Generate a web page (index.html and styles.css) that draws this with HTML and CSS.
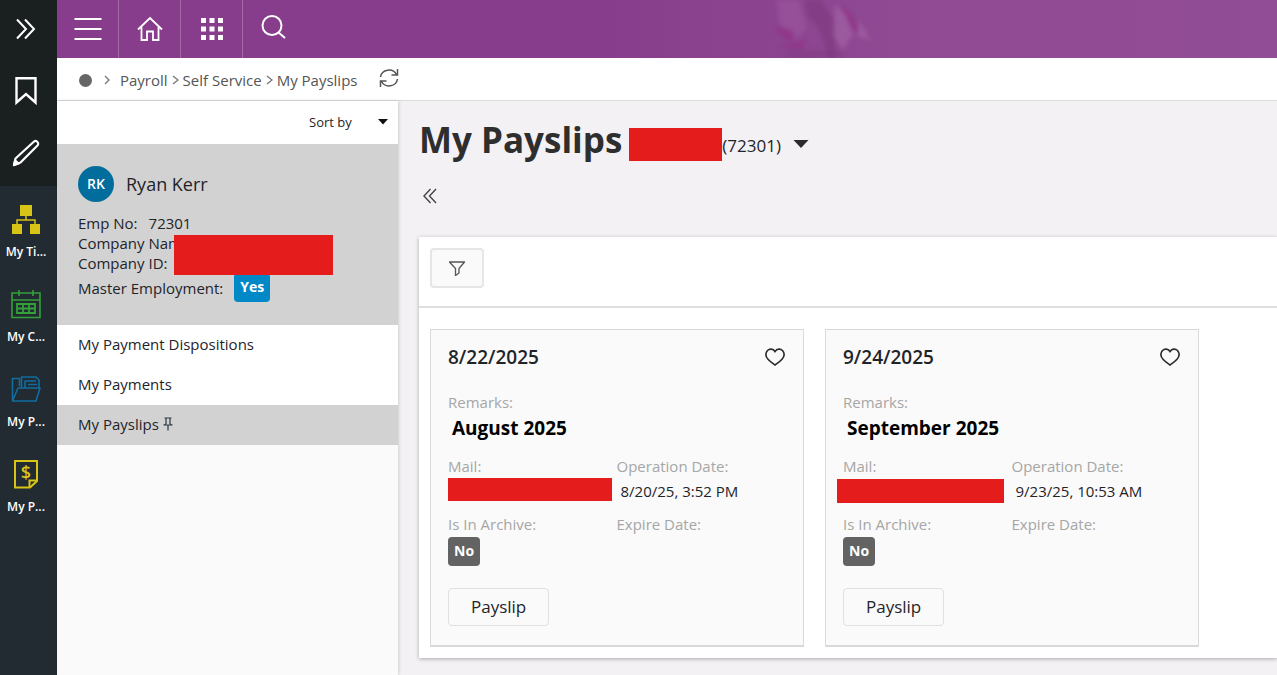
FILE: index.html
```
<!DOCTYPE html>
<html lang="en">
<head>
    <meta charset="UTF-8">
    <meta name="viewport" content="width=device-width, initial-scale=1.0">
    <title>My Payslips</title>
    <link rel="stylesheet" href="styles.css">
</head>
<body>
    <!-- Left rail -->
    <aside class="rail">
        <div class="rail-tools">
            <button type="button" class="rail-btn" aria-label="Expand menu">
                <svg width="20" height="22" viewBox="0 0 20 22" fill="none" stroke="#fff" stroke-width="2"><path d="M1 1.500l9 9.500-9 9.500M9 1.500l9 9.500-9 9.500"/></svg>
            </button>
            <button type="button" class="rail-btn" aria-label="Bookmarks">
                <svg width="22" height="30" viewBox="0 0 22 30" fill="none" stroke="#fff" stroke-width="2.400"><path d="M1.500 2.200h19v24.300L11 18 1.500 26.500z"/></svg>
            </button>
            <button type="button" class="rail-btn" aria-label="Edit">
                <svg width="28" height="28" viewBox="0 0 28 28" fill="none" stroke="#fff" stroke-width="2.200" stroke-linejoin="round"><path d="M2 26l1.500-6.500L21.500 3a2.200 2.200 0 0 1 4 3.500L8.500 23.500z"/><path d="M2 26l1.200-4.500 3.300 3z" fill="#fff"/></svg>
            </button>
        </div>
        <nav class="rail-nav">
            <a href="#" class="rail-link">
                <svg width="30" height="30" viewBox="0 0 30 30" fill="#d8c417"><path d="M9 1h12v11H9zM1 20h10v10H1zM19 20h10v10H19z"/><path d="M15 12v4M6 20v-4h18v4" fill="none" stroke="#d8c417" stroke-width="1.500"/></svg>
                <span>My Ti...</span>
            </a>
            <a href="#" class="rail-link">
                <svg width="30" height="30" viewBox="0 0 30 30" fill="none" stroke="#33a13a" stroke-width="1.600"><path d="M1 4h28v24.500H1zM1 11h28M8 1v6M22 1v6"/><path d="M6 15h18v9H6zM6 19.500h18M12 15v9M18 15v9" stroke-width="1.800"/></svg>
                <span>My C...</span>
            </a>
            <a href="#" class="rail-link">
                <svg width="30" height="30" viewBox="0 0 30 30" fill="none" stroke="#116d9f" stroke-width="1.600" stroke-linejoin="round"><path d="M1.500 27V4.500h7V12M1.500 27L7 14h22l-4 13z"/><path d="M10.500 14V3H25l3 3v8M14 14V7h11M17 10.500h9"/></svg>
                <span>My P...</span>
            </a>
            <a href="#" class="rail-link">
                <svg width="30" height="30" viewBox="0 0 30 30" fill="none" stroke="#d8c417" stroke-width="2"><path d="M4 2h22v20l-7 6.500H4z"/><path d="M18.500 28v-6.500H26"/><text x="15" y="20" text-anchor="middle" class="dollar">$</text></svg>
                <span>My P...</span>
            </a>
        </nav>
    </aside>

    <div class="page">
        <!-- Top bar -->
        <header class="topbar">
            <button type="button" class="top-btn" aria-label="Menu">
                <svg width="28" height="24" viewBox="0 0 28 24" stroke="#fff" stroke-width="2.200"><path d="M0.500 2h27M0.500 12h27M0.500 22h27"/></svg>
            </button>
            <button type="button" class="top-btn" aria-label="Home">
                <svg width="26" height="26" viewBox="0 0 26 26" fill="none" stroke="#fff" stroke-width="1.800"><path d="M1 13.500L13 2l12 11.500M4.500 11v13H10v-8.500h6V24h5.500V11"/></svg>
            </button>
            <button type="button" class="top-btn" aria-label="Apps">
                <svg width="22" height="22" viewBox="0 0 22 22" fill="#fff"><path d="M0 0h5v5H0zM8.500 0h5v5h-5zM17 0h5v5h-5zM0 8.500h5v5H0zM8.500 8.500h5v5h-5zM17 8.500h5v5h-5zM0 17h5v5H0zM8.500 17h5v5h-5zM17 17h5v5h-5z"/></svg>
            </button>
            <button type="button" class="top-btn" aria-label="Search">
                <svg width="26" height="28" viewBox="0 0 26 28" fill="none" stroke="#fff" stroke-width="2"><circle cx="11" cy="10.500" r="9.500"/><path d="M17.500 17.500l6.500 5.500"/></svg>
            </button>
            <svg class="banner" viewBox="0 0 120 58" aria-hidden="true">
                <path d="M8 0h22l8 28-10 10L10 24z" fill="#a765a8" opacity="0.350"/>
                <path d="M36 0h16l14 22v36h-8q-2-28-20-42z" fill="#753378" opacity="0.450"/>
                <path d="M4 28q14-2 22 6l-6 8zM72 6q10 4 14 14l6 14-8-4zM8 46l30-6-6 10z" fill="#932c84" opacity="0.550"/>
                <path d="M66 4l10 10 8 20-10 16-10-14zM90 20l12 20-14-4z" fill="#b47ab5" opacity="0.350"/>
                <path d="M20 50h50l6 8H16z" fill="#78347b" opacity="0.350"/>
            </svg>
        </header>

        <nav class="breadcrumb" aria-label="Breadcrumb">
            <span class="dot"></span>
            <svg class="chev first" width="6" height="10" viewBox="0 0 6 10"><path d="M1 1l4 4-4 4"/></svg>
            <a href="#">Payroll</a>
            <svg class="chev" width="7" height="10" viewBox="0 0 7 10"><path d="M1 1l5 4-5 4"/></svg>
            <a href="#">Self Service</a>
            <svg class="chev" width="7" height="10" viewBox="0 0 7 10"><path d="M1 1l5 4-5 4"/></svg>
            <a href="#">My Payslips</a>
            <button type="button" class="refresh" aria-label="Refresh">
                <svg width="20" height="20" viewBox="0 0 20 20" fill="none" stroke="#555" stroke-width="1.500"><path d="M1.500 9A8.500 8 0 0 1 17.500 6.500M18.500 1v6h-6M18.500 11A8.500 8 0 0 1 2.500 13.500M1.500 19v-6h6"/></svg>
            </button>
        </nav>

        <div class="columns">
            <!-- Employee panel -->
            <section class="side">
                <div class="sort-row">
                    <select class="sort" aria-label="Sort by">
                        <option>Sort by</option>
                    </select>
                    <svg width="10" height="6" viewBox="0 0 10 6"><path d="M0 0h10L5 5.500z" fill="#111"/></svg>
                </div>
                <div class="employee">
                    <div class="employee-head">
                        <span class="avatar">RK</span>
                        <span class="employee-name">Ryan Kerr</span>
                    </div>
                    <div class="facts">
                        <p><span>Emp No:</span><span>72301</span></p>
                        <p>Company Name:</p>
                        <p>Company ID:</p>
                        <span class="redact redact-company"></span>
                        <p class="master"><span>Master Employment:</span><span class="tag tag-yes">Yes</span></p>
                    </div>
                </div>
                <ul class="side-menu">
                    <li><a href="#">My Payment Dispositions</a></li>
                    <li><a href="#">My Payments</a></li>
                    <li class="active">
                        <a href="#">My Payslips
                            <svg width="10" height="14" viewBox="0 0 10 14" fill="none" stroke="#2b3944" stroke-width="1.200"><path d="M1.500 1h7M3 1v6M7 1v6M0.500 8h9M3 7L1 8M7 7l2 1M5 8v5.500"/></svg>
                        </a>
                    </li>
                </ul>
            </section>

            <main class="main">
                <div class="title-row">
                    <h1>My Payslips</h1>
                    <span class="redact redact-title"></span>
                    <span class="emp-id">(72301)</span>
                    <button type="button" class="caret" aria-label="Choose employee">
                        <svg width="16" height="8" viewBox="0 0 16 8"><path d="M0.500 0h15L8 8z" fill="#2b2b2b"/></svg>
                    </button>
                </div>
                <button type="button" class="collapse" aria-label="Collapse panel">
                    <svg width="14" height="16" viewBox="0 0 14 16" fill="none" stroke="#444" stroke-width="1.400"><path d="M7.500 1L1 8l6.500 7M13 1L6.500 8l6.500 7"/></svg>
                </button>

                <section class="panel">
                    <div class="panel-tools">
                        <button type="button" class="filter" aria-label="Filter">
                            <svg width="16" height="15" viewBox="0 0 16 15" fill="none" stroke="#555" stroke-width="1.300"><path d="M0.500 1h15L10 7.500V12l-3.500 2.500v-7z"/></svg>
                        </button>
                    </div>
                    <div class="cards">
                        <article class="card">
                            <div class="card-head">
                                <h2>8/22/2025</h2>
                                <button type="button" class="like" aria-label="Favourite">
                                    <svg width="20" height="18" viewBox="0 0 20 18" fill="none" stroke="#2b2b2b" stroke-width="1.600"><path d="M10 3.500C8 .5 4.500.5 2.500 2.500 0 5.500 1 9 3 11.200 5 13.500 8 15.500 10 17c2-1.500 5-3.500 7-5.800C19 9 20 5.500 17.500 2.500 15.500.5 12 .5 10 3.500z"/></svg>
                                </button>
                            </div>
                            <p class="label">Remarks:</p>
                            <p class="remark">August 2025</p>
                            <div class="fields">
                                <div>
                                    <p class="label">Mail:</p>
                                    <span class="redact redact-mail"></span>
                                </div>
                                <div>
                                    <p class="label">Operation Date:</p>
                                    <p class="value">8/20/25, 3:52 PM</p>
                                </div>
                                <div>
                                    <p class="label">Is In Archive:</p>
                                    <span class="tag tag-no">No</span>
                                </div>
                                <div>
                                    <p class="label">Expire Date:</p>
                                </div>
                            </div>
                            <button type="button" class="btn">Payslip</button>
                        </article>

                        <article class="card">
                            <div class="card-head">
                                <h2>9/24/2025</h2>
                                <button type="button" class="like" aria-label="Favourite">
                                    <svg width="20" height="18" viewBox="0 0 20 18" fill="none" stroke="#2b2b2b" stroke-width="1.600"><path d="M10 3.500C8 .5 4.500.5 2.500 2.500 0 5.500 1 9 3 11.200 5 13.500 8 15.500 10 17c2-1.500 5-3.500 7-5.800C19 9 20 5.500 17.500 2.500 15.500.5 12 .5 10 3.500z"/></svg>
                                </button>
                            </div>
                            <p class="label">Remarks:</p>
                            <p class="remark">September 2025</p>
                            <div class="fields">
                                <div>
                                    <p class="label">Mail:</p>
                                    <span class="redact redact-mail wide"></span>
                                </div>
                                <div>
                                    <p class="label">Operation Date:</p>
                                    <p class="value">9/23/25, 10:53 AM</p>
                                </div>
                                <div>
                                    <p class="label">Is In Archive:</p>
                                    <span class="tag tag-no">No</span>
                                </div>
                                <div>
                                    <p class="label">Expire Date:</p>
                                </div>
                            </div>
                            <button type="button" class="btn">Payslip</button>
                        </article>
                    </div>
                </section>
            </main>
        </div>
    </div>
</body>
</html>
```
FILE: styles.css
```
* {
    margin: 0;
    padding: 0;
    box-sizing: border-box;
}

body {
    display: flex;
    min-height: 100vh;
    background-color: #f3f1f4;
    color: #1f2429;
    font-family: "Open Sans", "Noto Sans", sans-serif;
    font-size: 15px;
    line-height: 20px;
}

a {
    color: inherit;
    text-decoration: none;
}

button,
select {
    border: none;
    background: none;
    color: inherit;
    font: inherit;
    cursor: pointer;
}

svg {
    display: block;
    flex: none;
}

/* Left rail */
.rail {
    flex: none;
    width: 57px;
    background-color: #222b32;
}

.rail-tools {
    display: flex;
    flex-direction: column;
    height: 186px;
    padding-right: 5px;
    background-color: #1a1f20;
}

.rail-btn {
    flex: 1;
    display: flex;
    align-items: center;
    justify-content: center;
    padding-bottom: 4px;
}

.rail-nav {
    padding: 18px 5px 0 0;
}

.rail-link {
    display: flex;
    flex-direction: column;
    align-items: center;
    gap: 8px;
    height: 85px;
    color: #fff;
    font-size: 12px;
    font-weight: 600;
}

.dollar {
    fill: #d8c417;
    stroke: none;
    font-size: 18px;
    font-weight: 600;
}

/* Top bar */
.page {
    flex: 1;
    min-width: 0;
    display: flex;
    flex-direction: column;
}

.topbar {
    display: flex;
    height: 58px;
    overflow: hidden;
    background: linear-gradient(90deg, #873d8b 0%, #873d8b 45%, #904a94 70%, #914d95 100%);
}

.top-btn {
    display: flex;
    align-items: center;
    justify-content: center;
    width: 62px;
    border-right: 1px solid #a469a7;
}

.top-btn:nth-child(4) {
    border-right: none;
}

.banner {
    width: 120px;
    height: 58px;
    margin-left: 38%;
    filter: blur(2px);
}

.breadcrumb {
    display: flex;
    align-items: center;
    gap: 4px;
    height: 43px;
    padding: 2px 22px 0;
    background-color: #fff;
    border-bottom: 1px solid #dcdcdc;
    color: #555;
}

.dot {
    width: 13px;
    height: 13px;
    border-radius: 50%;
    background-color: #666;
}

.chev {
    fill: none;
    stroke: #777;
    stroke-width: 1.3;
}

.chev.first {
    margin: 0 6px 0 8px;
}

.refresh {
    margin-left: 18px;
    padding-bottom: 4px;
}

.columns {
    flex: 1;
    display: flex;
}

/* Employee panel */
.side {
    flex: none;
    width: 341px;
    background-color: #fafafa;
    box-shadow: 1px 0 3px rgba(0, 0, 0, 0.15);
}

.sort-row {
    display: flex;
    align-items: center;
    justify-content: flex-end;
    gap: 26px;
    height: 43px;
    padding: 0 10px 2px 0;
    background-color: #fff;
}

.sort {
    appearance: none;
    font-size: 13px;
}

.employee {
    height: 181px;
    padding: 22px 21px;
    background-color: #d2d2d2;
}

.employee-head {
    display: flex;
    align-items: center;
    gap: 12px;
}

.avatar {
    display: flex;
    align-items: center;
    justify-content: center;
    width: 36px;
    height: 36px;
    border-radius: 50%;
    background-color: #006d9c;
    color: #fff;
    font-size: 14px;
    font-weight: 600;
}

.employee-name {
    font-size: 18px;
}

.facts {
    position: relative;
    margin-top: 11px;
}

.facts p {
    display: flex;
    gap: 11px;
}

.facts .master {
    align-items: center;
}

.redact {
    display: block;
    background-color: #e51c1c;
}

.redact-company {
    position: absolute;
    top: 22px;
    left: 96px;
    width: 159px;
    height: 40px;
}

.tag {
    display: inline-block;
    padding: 4px 6px 5px;
    border-radius: 4px;
    color: #fff;
    font-size: 14px;
    font-weight: 700;
}

.tag-yes {
    background-color: #0088c7;
}

.tag-no {
    background-color: #636363;
}

.side-menu {
    list-style: none;
    background-color: #fff;
}

.side-menu a {
    display: flex;
    align-items: center;
    gap: 4px;
    height: 40px;
    padding: 0 21px 2px;
}

.side-menu .active {
    background-color: #d2d2d2;
}

/* Main area */
.main {
    flex: 1;
    min-width: 0;
    padding: 15px 0 16px 21px;
}

.title-row {
    display: flex;
    align-items: center;
    height: 48px;
}

h1 {
    color: #2e2e2e;
    font-size: 35px;
    line-height: 48px;
}

.redact-title {
    width: 93px;
    height: 33px;
    margin: 8px 0 0 7px;
}

.emp-id {
    margin-top: 12px;
    font-size: 17px;
}

.caret {
    margin: 8px 0 0 12px;
}

.collapse {
    display: block;
    margin: 24px 0 0 4px;
}

.panel {
    margin-top: 33px;
    background-color: #fff;
    box-shadow: 0 1px 4px rgba(0, 0, 0, 0.3);
}

.panel-tools {
    padding: 11px;
    padding-bottom: 18px;
    border-bottom: 2px solid #dedede;
}

.filter {
    display: flex;
    align-items: center;
    justify-content: center;
    width: 54px;
    height: 40px;
    border: 2px solid #e6e6e6;
    border-radius: 4px;
    background-color: #fafafa;
}

.cards {
    display: grid;
    grid-template-columns: repeat(auto-fill, minmax(340px, 374px));
    gap: 21px;
    padding: 21px 11px 11px;
}

.card {
    padding: 15px 18px 19px 17px;
    border: 1px solid #d9d9d9;
    border-bottom-width: 2px;
    background-color: #fafafa;
}

.card-head {
    display: flex;
    align-items: center;
    justify-content: space-between;
    margin-bottom: 23px;
}

h2 {
    font-size: 19px;
    font-weight: 600;
    line-height: 24px;
}

.label {
    color: #a6a6a6;
}

.remark {
    margin: 4px 0 16px 4px;
    color: #000;
    font-size: 19px;
    font-weight: 700;
    line-height: 24px;
}

.fields {
    display: grid;
    grid-template-columns: 1fr 1fr;
    grid-auto-rows: 58px;
}

.value {
    margin: 5px 0 0 4px;
}

.redact-mail {
    width: 164px;
    height: 23px;
    margin-top: 2px;
}

.redact-mail.wide {
    width: 167px;
    height: 24px;
    margin: 3px 0 0 -6px;
}

.fields .tag {
    margin-top: 3px;
}

.btn {
    height: 38px;
    margin-top: 16px;
    padding: 0 22px;
    border: 1px solid #e0e0e0;
    border-radius: 4px;
    font-size: 17px;
}
```
